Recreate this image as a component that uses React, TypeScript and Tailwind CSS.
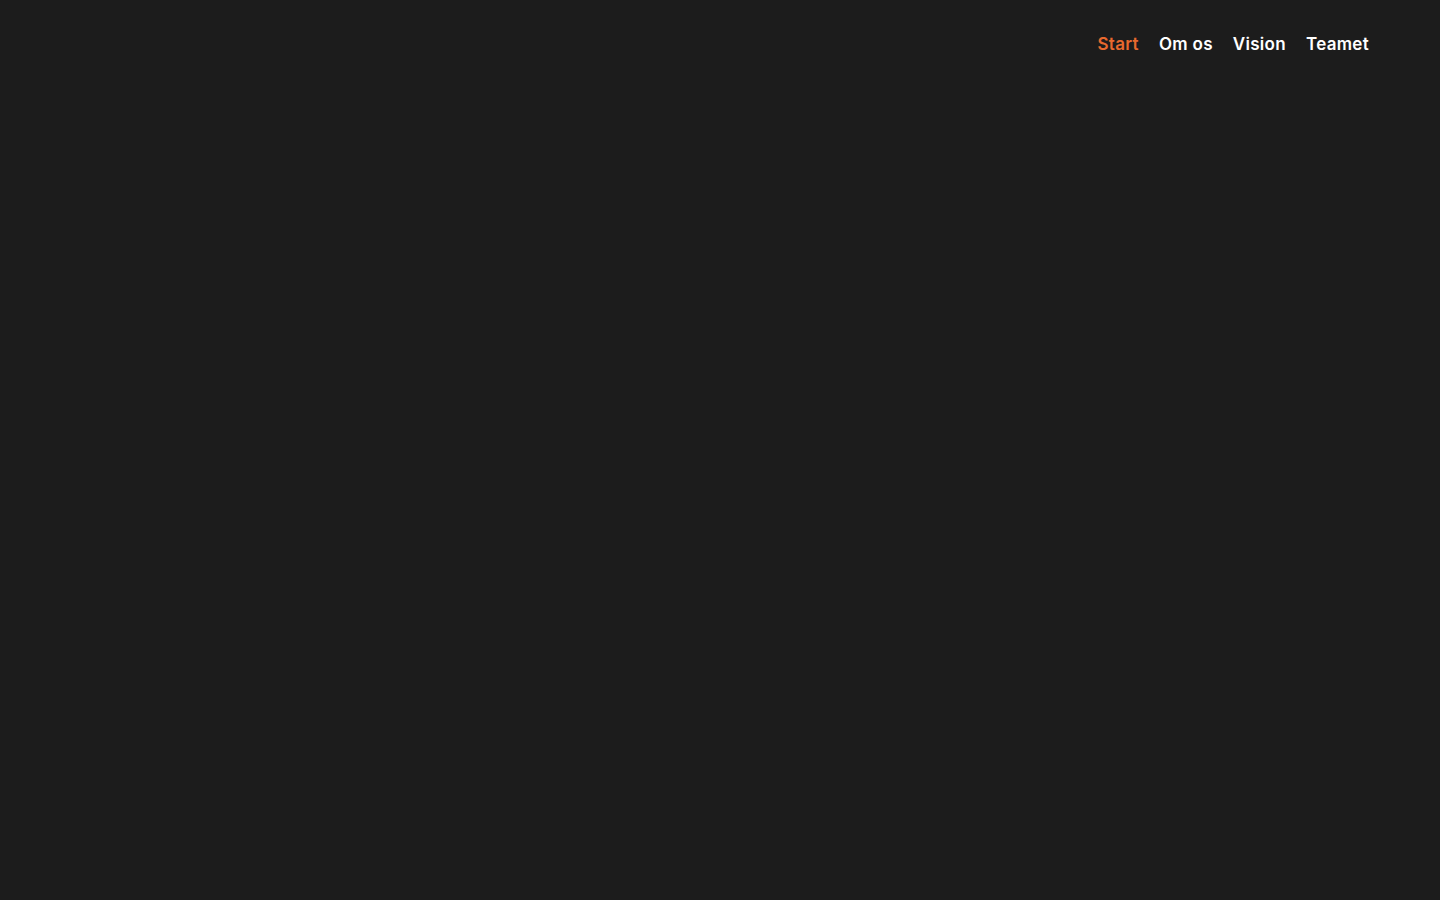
import React from "react";

export default function App() {
  const links = ["Start", "Om os", "Vision", "Teamet"];
  return (
    <div
      className="min-h-[4080px] bg-[#1c1c1c]"
      style={{ fontFamily: "Inter, 'Open Sans', sans-serif" }}
    >
      <header className="flex justify-end pl-[55px] pr-[71px] pt-[31px]">
        <nav className="flex items-center gap-[20px]">
          {links.map((l, i) => (
            <a
              key={l}
              href="#"
              className={
                "text-[17px] font-semibold leading-[26px] tracking-[0.3px] " +
                (i === 0 ? "text-[#e8692e]" : "text-white")
              }
            >
              {l}
            </a>
          ))}
        </nav>
      </header>
    </div>
  );
}
